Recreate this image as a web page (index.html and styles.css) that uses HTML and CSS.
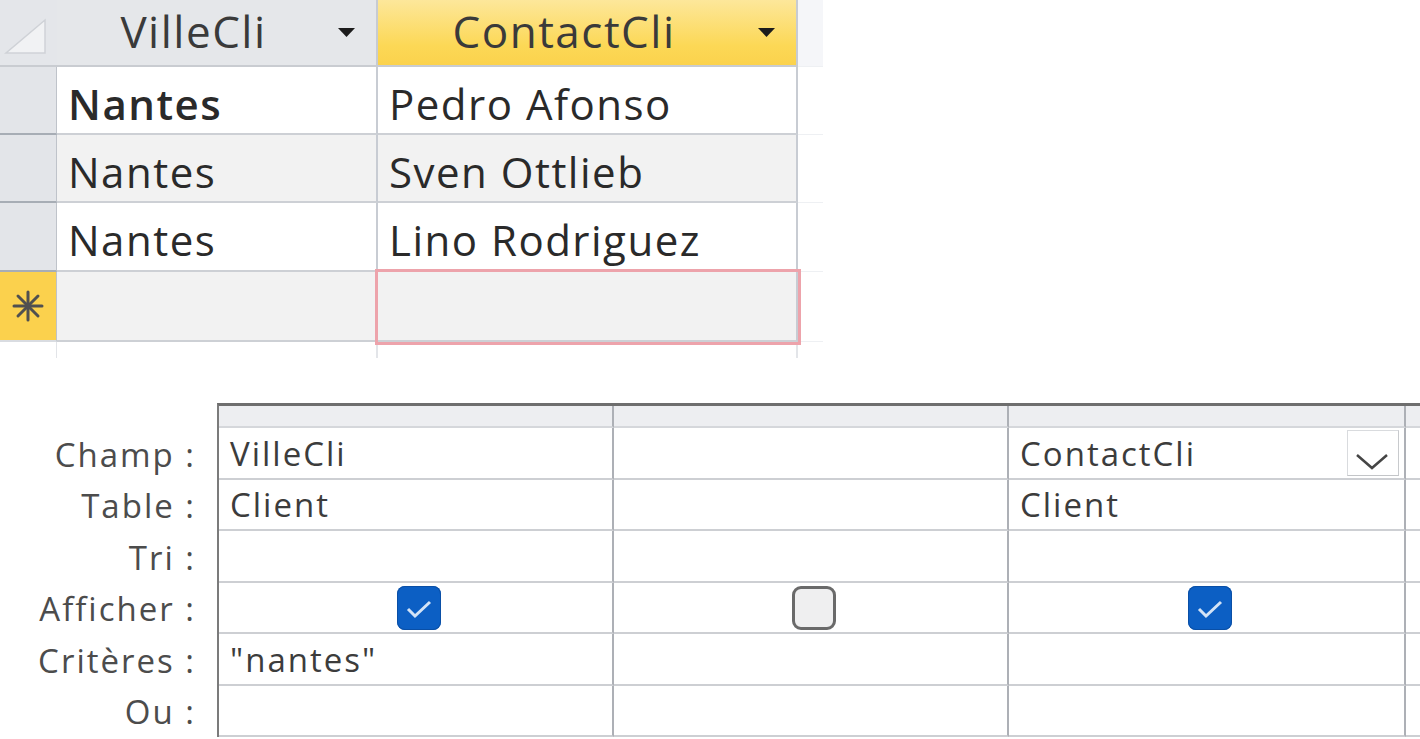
FILE: index.html
```html
<!DOCTYPE html>
<html lang="fr">
<head>
<meta charset="utf-8">
<title>Requête Client</title>
<link rel="stylesheet" href="styles.css">
</head>
<body>
<div class="page">
  <section class="sheet">
    <div class="sel corner">
      <svg class="corner-tri" width="50" height="60" viewBox="0 0 50 60"><polygon points="6,53 45,53 45,20" fill="#f1f2f4" stroke="#cfd2d7" stroke-width="1.5"/></svg>
    </div>
    <div class="hcell"><span class="htext">VilleCli</span><svg class="harrow" width="17" height="9" viewBox="0 0 17 9"><polygon points="0,0 17,0 8.5,9" fill="#1c1c1c"/></svg></div>
    <div class="hcell active"><span class="htext">ContactCli</span><svg class="harrow" width="17" height="9" viewBox="0 0 17 9"><polygon points="0,0 17,0 8.5,9" fill="#1c1c1c"/></svg></div>
    <div class="ghost ghost-head"></div>

    <div class="sel"></div>
    <div class="cell current">Nantes</div>
    <div class="cell">Pedro Afonso</div>
    <div class="ghost"></div>

    <div class="sel"></div>
    <div class="cell alt">Nantes</div>
    <div class="cell alt">Sven Ottlieb</div>
    <div class="ghost"></div>

    <div class="sel"></div>
    <div class="cell">Nantes</div>
    <div class="cell">Lino Rodriguez</div>
    <div class="ghost"></div>

    <div class="sel newrow">
      <svg width="32" height="32" viewBox="0 0 32 32"><g stroke="#505050" stroke-width="3" stroke-linecap="round"><line x1="16" y1="2" x2="16" y2="30"/><line x1="2" y1="16" x2="30" y2="16"/><line x1="6" y1="6" x2="26" y2="26"/><line x1="26" y1="6" x2="6" y2="26"/></g></svg>
    </div>
    <div class="cell alt"></div>
    <div class="cell alt focus"></div>
    <div class="ghost"></div>

    <div class="sel tail"></div>
    <div class="cell tail"></div>
    <div class="cell tail"></div>
    <div class="ghost tail"></div>
  </section>

  <section class="design">
    <div class="labels">
      <div class="lab r52">Champ :</div>
      <div class="lab r51">Table :</div>
      <div class="lab r52">Tri :</div>
      <div class="lab r51">Afficher :</div>
      <div class="lab r52">Critères :</div>
      <div class="lab r51">Ou :</div>
    </div>
    <div class="qgrid">
      <div class="qh"></div><div class="qh"></div><div class="qh"></div><div class="qh last"></div>

      <div class="qc">VilleCli</div>
      <div class="qc"></div>
      <div class="qc">ContactCli<span class="dd"><svg width="50" height="44" viewBox="0 0 50 44"><polyline points="9,24 24,37 39,24" fill="none" stroke="#454545" stroke-width="2.5"/></svg></span></div>
      <div class="qc last"></div>

      <div class="qc">Client</div>
      <div class="qc"></div>
      <div class="qc">Client</div>
      <div class="qc last"></div>

      <div class="qc"></div>
      <div class="qc"></div>
      <div class="qc"></div>
      <div class="qc last"></div>

      <div class="qc center"><span class="cb on"><svg width="44" height="44" viewBox="0 0 44 44"><polyline points="11,23 18,30 33,16" fill="none" stroke="#d3e3f6" stroke-width="3"/></svg></span></div>
      <div class="qc center"><span class="cb off"></span></div>
      <div class="qc center"><span class="cb on"><svg width="44" height="44" viewBox="0 0 44 44"><polyline points="11,23 18,30 33,16" fill="none" stroke="#d3e3f6" stroke-width="3"/></svg></span></div>
      <div class="qc last"></div>

      <div class="qc">"nantes"</div>
      <div class="qc"></div>
      <div class="qc"></div>
      <div class="qc last"></div>

      <div class="qc"></div>
      <div class="qc"></div>
      <div class="qc"></div>
      <div class="qc last"></div>
    </div>
  </section>
</div>
</body>
</html>
```

FILE: styles.css
```css
* { box-sizing: border-box; }

html, body {
  margin: 0;
  padding: 0;
  background: #ffffff;
}

body {
  font-family: "Open Sans", "Segoe UI", "DejaVu Sans", sans-serif;
  color: #333;
  width: 1420px;
  height: 739px;
  overflow: hidden;
}

/* ---------- Datasheet ---------- */
.sheet {
  display: grid;
  grid-template-columns: 57px 321px 420px 25px;
  grid-template-rows: 67px 68px 68px 69px 70px 16px;
  width: 823px;
}

.sel {
  background: #e3e5e9;
  border-right: 1px solid #bfc3ca;
  border-bottom: 2px solid #a7adb5;
  display: flex;
  align-items: center;
  justify-content: center;
}

.sel.corner {
  background: #e4e6ea;
  border-bottom: 2px solid #c9ccd1;
  border-right: none;
  align-items: flex-start;
  justify-content: flex-start;
}

.corner-tri { display: block; }

.sel.newrow {
  background: #fbd14d;
  border-bottom: 2px solid #d9dce1;
}

.sel.tail {
  background: #ffffff;
  border-bottom: none;
  border-right: 1px solid #e2e4e8;
}

.hcell {
  background: #e5e7ea;
  border-right: 2px solid #c7cbd2;
  border-bottom: 2px solid #c9ccd1;
  display: flex;
  align-items: center;
  padding: 0 21px 4px 0;
  font-size: 44px;
  letter-spacing: 1.5px;
  color: #3a3a3a;
}

.hcell.active {
  background: linear-gradient(#fde79a, #fcd856 70%, #fbd24c);
}

.htext {
  flex: 1;
  text-align: center;
  margin-right: 8px;
}

.harrow { flex: none; margin-top: 4px; }

.cell {
  background: #ffffff;
  border-right: 2px solid #c8ccd3;
  border-bottom: 2px solid #cdd0d5;
  display: flex;
  align-items: center;
  padding: 6px 0 0 11px;
  font-size: 42px;
  letter-spacing: 1.5px;
  color: #2a2a2a;
  white-space: nowrap;
}

.cell.alt { background: #f2f2f2; }

.cell.current { font-weight: 600; color: #2a2a2a; }

.cell.focus {
  outline: 3px solid #eda3ab;
  position: relative;
  z-index: 1;
}

.cell.tail {
  background: #ffffff;
  border-bottom: none;
  border-right: 2px solid #e3e5e9;
}

.ghost {
  background: #ffffff;
  border-bottom: 1px solid #eef0f3;
}

.ghost-head { background: #f5f6f9; }

.ghost.tail { border-bottom: none; }

/* ---------- Query design grid ---------- */
.design {
  display: flex;
  margin-top: 45px;
}

.labels {
  width: 217px;
  flex: none;
  padding-top: 25px;
  display: flex;
  flex-direction: column;
}

.lab {
  display: flex;
  align-items: center;
  justify-content: flex-end;
  padding-right: 21px;
  font-size: 33px;
  letter-spacing: 2px;
  color: #4c4c4c;
  white-space: nowrap;
}

.r52 { height: 52px; }
.r51 { height: 51px; }

.qgrid {
  flex: 1;
  display: grid;
  grid-template-columns: 395px 395px 397px 1fr;
  grid-template-rows: 22px 52px 51px 52px 51px 52px 51px;
  border-top: 3px solid #6e6e6e;
  border-left: 2px solid #7b7b7b;
}

.qh {
  background: #edeef1;
  border-right: 2px solid #adb0b6;
  border-bottom: 2px solid #d5d7db;
}

.qc {
  background: #ffffff;
  border-right: 2px solid #adb0b6;
  border-bottom: 2px solid #cdcfd3;
  display: flex;
  align-items: center;
  padding: 0 5px 0 11px;
  font-size: 33px;
  letter-spacing: 2px;
  color: #3c3c3c;
  white-space: nowrap;
}

.qh.last, .qc.last { border-right: none; }

.qc.center {
  justify-content: center;
  padding-left: 11px;
}

.dd {
  margin-left: auto;
  width: 52px;
  height: 46px;
  border: 1px solid #d9dbde;
  border-right-color: #c8cacd;
  border-bottom-color: #c3c5c8;
  background: #ffffff;
  display: flex;
  align-items: center;
  justify-content: center;
}

.dd svg { display: block; }

.cb {
  width: 44px;
  height: 44px;
  border-radius: 8px;
  display: block;
}

.cb svg { display: block; }

.cb.on {
  background: #0c5fc4;
  box-shadow: inset 0 0 0 1px #0a4fa6;
}

.cb.off {
  background: #efeff0;
  border: 3px solid #6a6a6a;
  border-radius: 9px;
}
```
